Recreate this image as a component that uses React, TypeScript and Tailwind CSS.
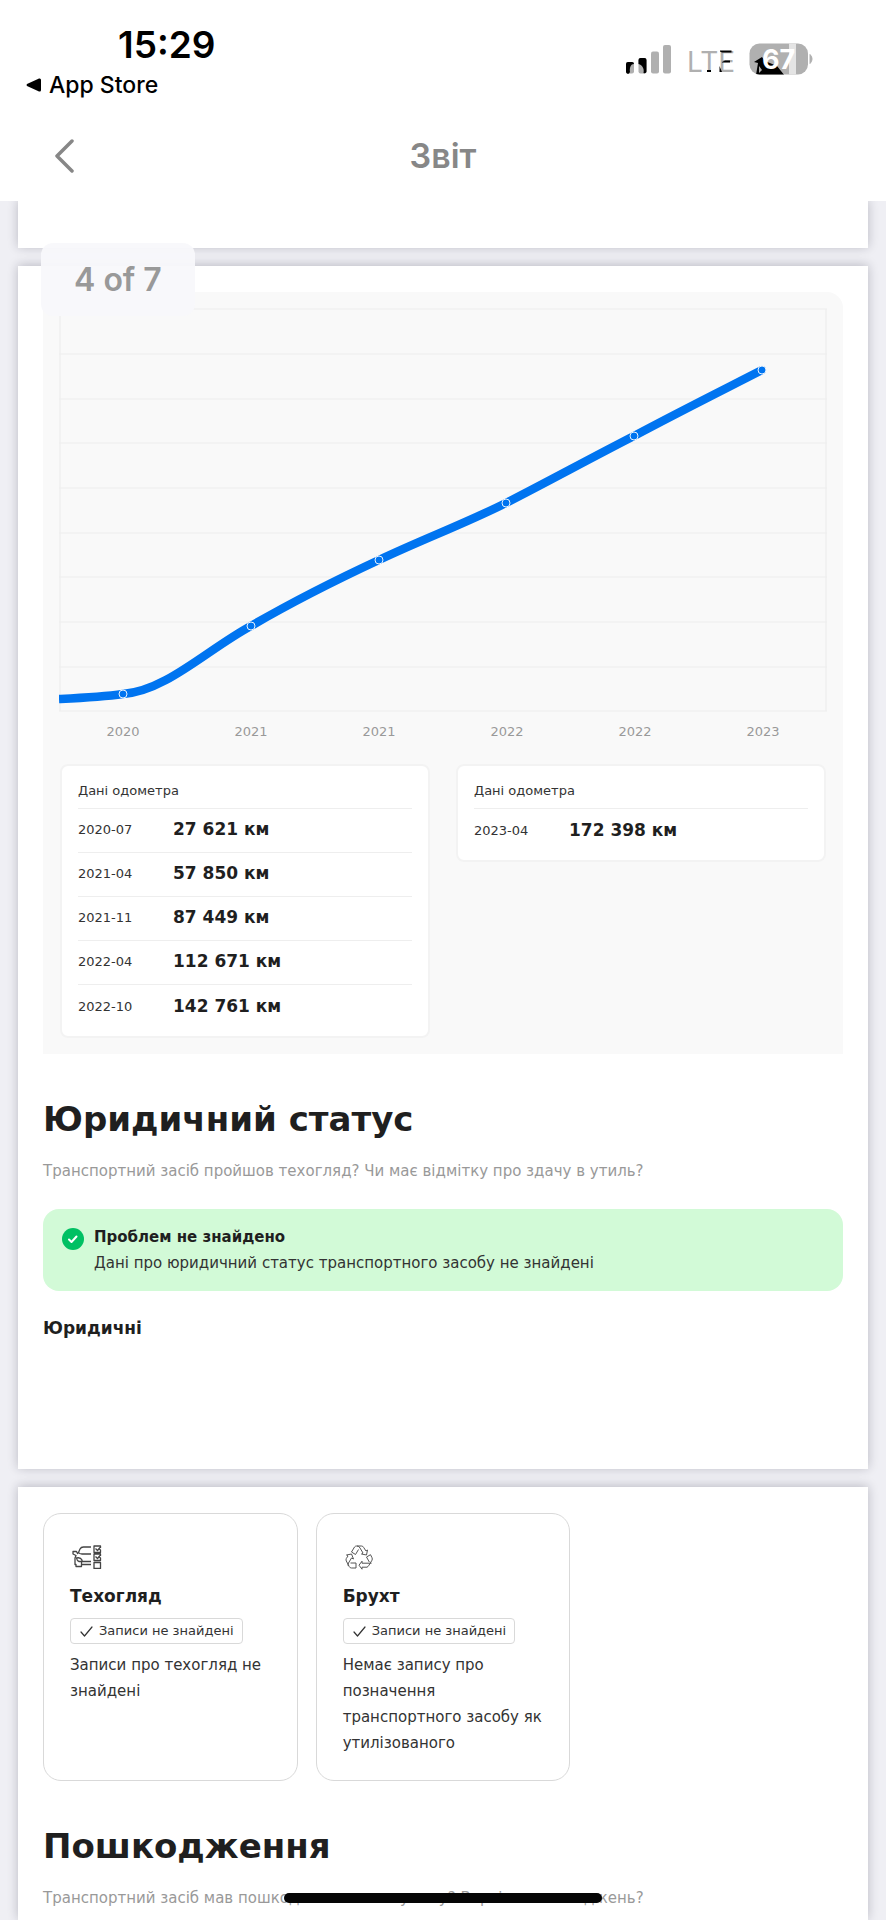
import { ReactNode } from "react";

interface OdometerRecord {
  date: string;
  value: string;
}

const records: OdometerRecord[] = [
  { date: "2020-07", value: "27 621 км" },
  { date: "2021-04", value: "57 850 км" },
  { date: "2021-11", value: "87 449 км" },
  { date: "2022-04", value: "112 671 км" },
  { date: "2022-10", value: "142 761 км" },
  { date: "2023-04", value: "172 398 км" },
];

const chartPoints = [
  [64, 386],
  [192, 318],
  [320, 252],
  [447, 195],
  [575, 128],
  [703, 62],
];

const gridLines = [1, 46, 91, 135, 180, 225, 269, 314, 359, 403];

function StatusIcons() {
  return (
    <svg viewBox="0 0 190 40" className="h-10 w-[190px]" aria-label="LTE, 67%">
      <defs>
        <clipPath id="battery-body">
          <rect x="124.500" y="1.500" width="58.500" height="31" rx="10" />
        </clipPath>
      </defs>
      <g fill="#b0b0b0">
        <rect x="1" y="20" width="8" height="11.500" rx="2" />
        <rect x="13.500" y="16" width="8" height="15.500" rx="2" />
        <rect x="26" y="9.500" width="8" height="22" rx="2" />
        <rect x="38" y="3" width="8" height="28.500" rx="2" />
      </g>
      <path d="M1 22a2 2 0 0 1 2-2h4a2 2 0 0 1 2 2c-4 0-4.500 5-4 8l-1 1.500a2 2 0 0 1-3-2zM13.500 18a2 2 0 0 1 2-2h4a2 2 0 0 1 2 2v11.500a2 2 0 0 1-3 1.500c1-4-1-8-5-9z" />
      <text x="62" y="30" fontFamily="Inter, sans-serif" fontSize="28" fill="#b0b0b0">LTE</text>
      <path d="M82 28h4v2h-4zM95 9.500l2 1h9.500V8.500H95zM94.500 24l2.500 6h-2.500zM97 20l3-1.500h5v2h-8z" />
      <g clipPath="url(#battery-body)">
        <rect x="124" y="1" width="60" height="32" fill="#b0b0b0" />
        <rect x="164" y="1" width="7" height="32" fill="#e4e4e4" />
        <path d="M129 20l8-5 3 4 12 5 8 10h-27l-2-1 2-12z" />
        <path d="M134 24l3 4-3 3z" fill="#b0b0b0" />
      </g>
      <path d="M185 12.500a6 6 0 0 1 0 9z" fill="#b0b0b0" stroke="#b0b0b0" />
      <text x="137" y="27" fontFamily="Inter, sans-serif" fontSize="27" fontWeight="700" fill="#fff">67</text>
    </svg>
  );
}

function Header() {
  return (
    <header className="relative z-40 bg-white pb-[22px] font-[Inter,sans-serif]">
      <div className="flex items-start justify-between pl-[26px] pr-[71px] pt-6">
        <div>
          <p className="pl-[92px] text-[37px] font-semibold leading-[42px] text-black">15:29</p>
          <a href="#store" className="flex h-[38px] items-center gap-2 text-[23px] font-medium text-black">
            <svg viewBox="0 0 15 14" className="h-[14px] w-[15px]" aria-hidden="true">
              <path d="M1 6Q0 7 1 8L13 13.500Q15 14 15 12V2Q15 0 13 .5Z" />
            </svg>
            App Store
          </a>
        </div>
        <div className="pt-[18px]">
          <StatusIcons />
        </div>
      </div>
      <nav className="grid h-[75px] grid-cols-[1fr_auto_1fr] items-end px-12">
        <button type="button" aria-label="Назад" className="flex h-[46px] w-[34px] items-center justify-center">
          <svg viewBox="0 0 20 34" className="h-[34px] w-5" fill="none" stroke="#878787" strokeWidth="3.500" strokeLinecap="round" strokeLinejoin="round">
            <path d="M17 2L2 17l15 15" />
          </svg>
        </button>
        <h1 className="text-[34px] font-semibold leading-[46px] text-[#878787]">Звіт</h1>
      </nav>
    </header>
  );
}

function Sheet({ children, className }: { children?: ReactNode; className: string }) {
  return (
    <section className={`relative bg-white px-[25px] shadow-[0_-1px_10px_rgba(20,20,40,0.24)] ${className}`}>
      {children}
    </section>
  );
}

function OdometerChart() {
  return (
    <div>
      <svg viewBox="0 0 768 404" className="block w-full" role="img" aria-label="Графік пробігу">
        <g stroke="#f0f0f0" strokeWidth="1.500">
          {gridLines.map((y) => (
            <path key={y} d={`M0 ${y}H768`} />
          ))}
          <path d="M1 1V403M767 1V403" />
        </g>
        <path
          d="M0 391C21 390 43 389 64 386C107 383 149 341 192 318C235 293 277 272 320 252C362 232 405 216 447 195C490 173 532 150 575 128C618 105 660 84 703 62"
          fill="none"
          stroke="#0074f0"
          strokeWidth="8.500"
        />
        {chartPoints.map(([x, y]) => (
          <circle key={x} cx={x} cy={y} r="4" fill="#0074f0" stroke="#e6f1fd" strokeWidth="1" />
        ))}
      </svg>
      <div className="grid grid-cols-6 pt-[10px] text-center text-[13px] leading-5 text-[#999]">
        {records.map(({ date }) => (
          <span key={date}>{date.slice(0, 4)}</span>
        ))}
      </div>
    </div>
  );
}

function OdometerTable({ rows }: { rows: OdometerRecord[] }) {
  return (
    <div className="rounded-lg border-2 border-[#f3f3f3] bg-white px-4 pb-2 pt-[10px]">
      <table className="w-full border-collapse text-left text-[13px]">
        <thead>
          <tr>
            <th colSpan={2} className="h-8 pb-[2px] font-normal">Дані одометра</th>
          </tr>
        </thead>
        <tbody>
          {rows.map(({ date, value }) => (
            <tr key={date} className="h-11 border-t border-[#eee]">
              <td className="w-[95px]">{date}</td>
              <td className="text-[17px] font-bold text-[#1f1f1f]">{value}</td>
            </tr>
          ))}
        </tbody>
      </table>
    </div>
  );
}

function CarChecklistIcon() {
  return (
    <svg viewBox="0 0 30 24" className="h-6 w-[30px]" fill="none" stroke="#444" strokeWidth="1.300" strokeLinejoin="round">
      <path d="M19 2h-7.500Q9 2 8 4L6.500 7.500Q7.500 9 10 9h9M6.500 7.500L5.500 8.500 4.500 6.500H1V9l3 1.500L3 13v6.500h1v2h5.500v-2H19M9.500 19.500v-3H19" />
      <path d="M4.500 13q4-1 5.500 2v1.500H7q-2-.5-2.500-3.500z" />
      <path d="M28.500 3V1H22v6.500h6.500V5l-2-1.500M23.500 3.500l2 2 2.500-3M28.500 11V9H22v6.500h6.500V13l-2-1.500M23.500 11.500l2 2 2.500-3M22 17.500h6.500v6H22z" />
    </svg>
  );
}

function RecycleIcon() {
  return (
    <svg viewBox="0 0 28 25" className="h-[25px] w-7" fill="none" stroke="#555" strokeWidth="1" strokeLinejoin="round">
      <path d="M6.500 7L9.500 2q.8-1 2-1h5q1.500 0 2.200 1.500L21 6l1.500-1-1 5-5-1 1.500-1-3-5q-1-2-3-2M6.500 7l4 2.500 3-5" />
      <path d="M21.500 12l4-2.300 1.500 3q.6 1.300 0 2.500l-3 5q-.8 1.500-2 2H17v2l-3-4 3-4v2h9.500M21.500 12l2.800 5" />
      <path d="M11 18v5H6.500q-1.500 0-2.200-1.300L1.300 16q-.6-1 0-2.500L3 11l-1.500-1 5-1 2 5-2-1-3 5q-.8 1.500-.2 3M11 18H5.500" />
    </svg>
  );
}

function RecordCard({ icon, title, children }: { icon: ReactNode; title: string; children: ReactNode }) {
  return (
    <article className="rounded-[18px] border border-[#d9d9d9] px-[26px] pb-6 pt-[30px]">
      <div className="flex h-[26px] items-center pl-[2px]">{icon}</div>
      <h4 className="mt-[13px] text-[17px] font-bold leading-[26px] text-[#1f1f1f]">{title}</h4>
      <p className="mt-[9px] flex h-[26px] w-fit items-center gap-[6px] whitespace-nowrap rounded border border-[#d9d9d9] px-2 text-[13px]">
        <svg viewBox="0 0 13 11" className="ml-px h-[11px] w-[13px]" fill="none" stroke="#333" strokeWidth="1.200" strokeLinecap="round" strokeLinejoin="round">
          <path d="M1 6l3.500 4L12 1" />
        </svg>
        Записи не знайдені
      </p>
      <p className="mt-2 text-[15px] leading-[26px]">{children}</p>
    </article>
  );
}

export default function App() {
  return (
    <div className="relative flex min-h-screen flex-col overflow-hidden bg-[#efeff4] font-['DejaVu_Sans',sans-serif] text-[#333]">
      <Header />

      <main className="relative flex grow flex-col gap-[18px] px-[18px]">
        <div className="absolute left-[41px] top-[42px] z-40 flex h-[73px] items-center rounded-xl bg-[#f8f8fb]/95 px-[33px] font-[Inter,sans-serif] text-[32px] font-semibold text-[#999]">
          4 of 7
        </div>

        <Sheet className="z-30 h-[47px]" />

        <Sheet className="z-20 pb-[128px] pt-[26px]">
          <div className="rounded-t-2xl bg-[#f9f9f9] px-4 pb-4 pt-4">
            <OdometerChart />
            <div className="mt-[22px] grid grid-cols-2 items-start gap-[26px] pl-px pr-px">
              <OdometerTable rows={records.slice(0, 5)} />
              <OdometerTable rows={records.slice(5)} />
            </div>
          </div>

          <h2 className="mt-11 text-[34px] font-bold leading-[42px] text-[#1f1f1f]">Юридичний статус</h2>
          <p className="mt-[18px] text-[15px] leading-[26px] text-[#999]">
            Транспортний засіб пройшов техогляд? Чи має відмітку про здачу в утиль?
          </p>

          <div className="mt-[25px] flex gap-[10px] rounded-2xl bg-[#d2fad7] px-[19px] py-[15px] text-[15px] leading-[26px]">
            <svg viewBox="0 0 22 22" className="mt-1 size-[22px] shrink-0" aria-hidden="true">
              <circle cx="11" cy="11" r="11" fill="#00c063" />
              <path d="M7 11.500l2.500 2.500 5-5.500" fill="none" stroke="#fff" strokeWidth="2" strokeLinecap="round" strokeLinejoin="round" />
            </svg>
            <div>
              <p className="font-bold text-[#1f1f1f]">Проблем не знайдено</p>
              <p>Дані про юридичний статус транспортного засобу не знайдені</p>
            </div>
          </div>

          <h3 className="mt-6 text-[17px] font-bold leading-[26px] text-[#1f1f1f]">Юридичні</h3>
        </Sheet>

        <Sheet className="z-10 grow pt-[26px]">
          <div className="grid grid-cols-3 gap-[18px]">
            <RecordCard icon={<CarChecklistIcon />} title="Техогляд">
              Записи про техогляд не знайдені
            </RecordCard>
            <RecordCard icon={<RecycleIcon />} title="Брухт">
              Немає запису про позначення транспортного засобу як утилізованого
            </RecordCard>
          </div>

          <h2 className="mt-11 text-[34px] font-bold leading-[42px] text-[#1f1f1f]">Пошкодження</h2>
          <p className="mt-[18px] text-[15px] leading-[26px] text-[#999]">
            Транспортний засіб мав пошкодження в минулому? Вартість пошкоджень?
          </p>
        </Sheet>
      </main>

      <div className="absolute inset-x-0 bottom-[17px] z-50 mx-auto h-[10px] w-[318px] rounded-full bg-[#050505]" />
    </div>
  );
}
